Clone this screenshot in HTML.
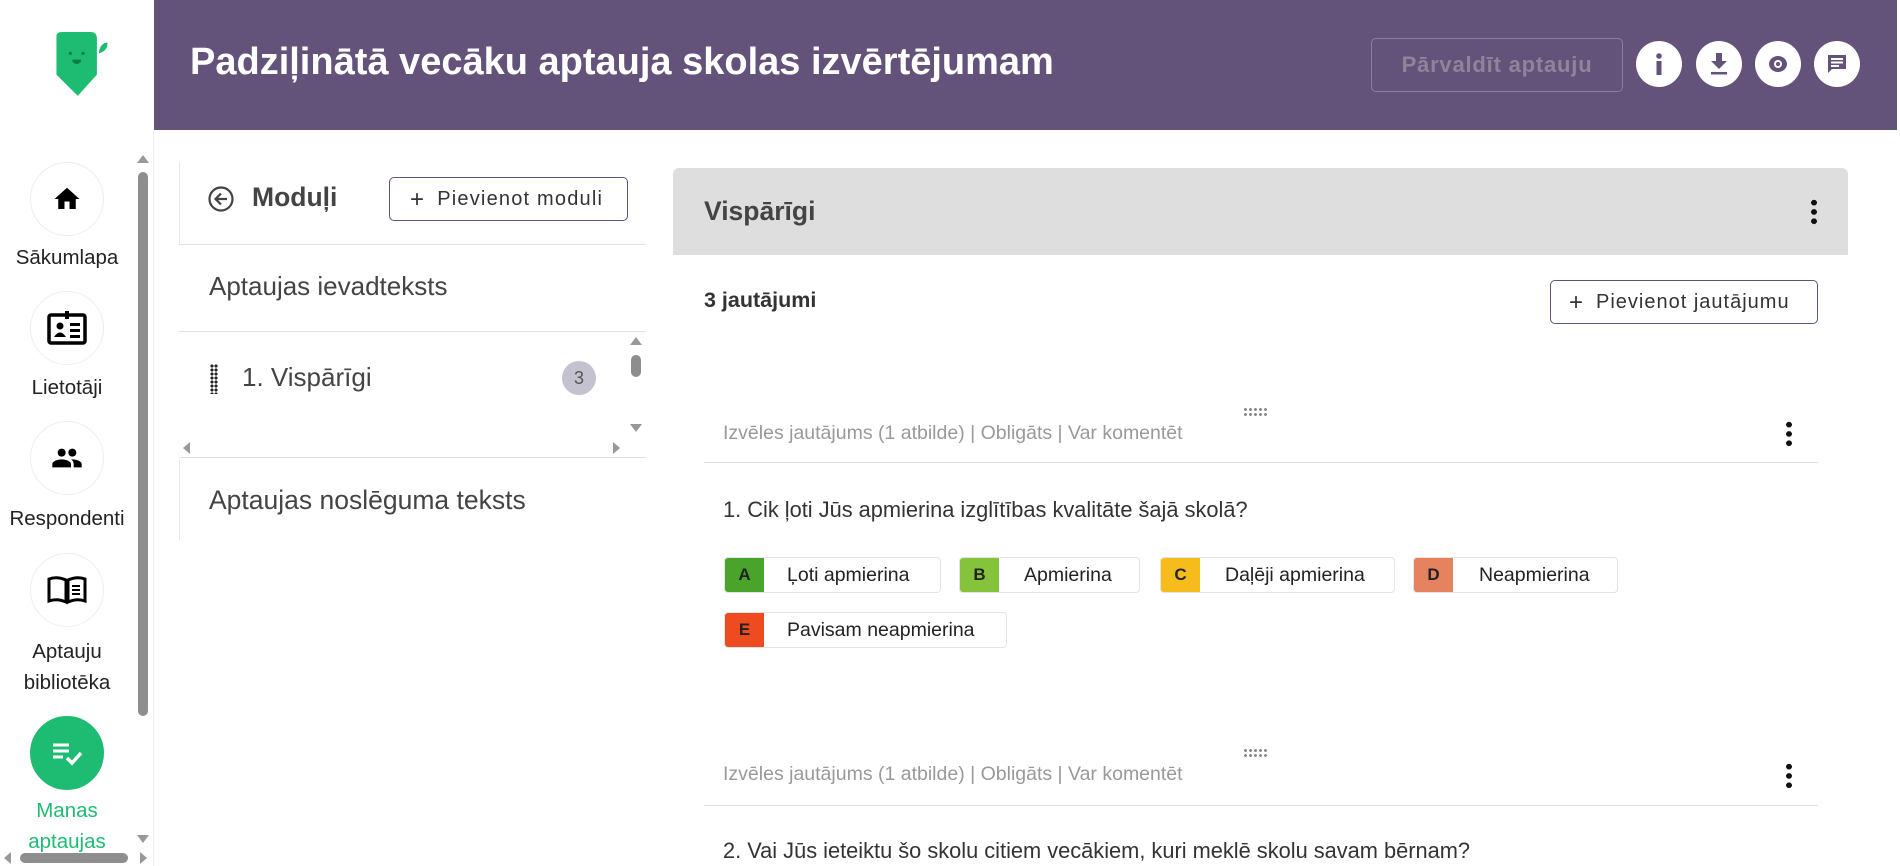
<!DOCTYPE html>
<html><head><meta charset="utf-8"><style>
*{box-sizing:border-box;margin:0;padding:0}
body{width:1900px;height:866px;overflow:hidden;background:#fff;font-family:"Liberation Sans",Arial,sans-serif;position:relative;color:#222}
.a{position:absolute}
.hdr{left:154px;top:0;width:1743px;height:130px;background:#63527a}
.title{left:190px;top:41px;font-size:38px;font-weight:bold;color:#fff;white-space:nowrap}
.mbtn{left:1371px;top:38px;width:252px;height:54px;border:1px solid #8a7d9c;border-radius:5px;color:#8f8499;font-size:22px;font-weight:bold;text-align:center;line-height:52px;letter-spacing:.8px}
.ic{width:46px;height:46px;border-radius:50%;background:#fff;top:41px}
.nav{width:74px;height:74px;border-radius:50%;border:1px solid #eee;left:30px;display:flex;align-items:center;justify-content:center}
.nl{left:0;width:134px;text-align:center;font-size:20.5px;color:#222;line-height:32px}
.sep{background:#e0e0e0;height:1px}
.opt{height:36px;border:1px solid #e4e4e4;border-radius:4px;background:#fff}
.opt b{position:absolute;left:0;top:0;width:39px;height:34px;border-radius:3px 0 0 3px;text-align:center;line-height:34px;font-size:17px}
.opt span{position:absolute;top:0;line-height:34px;font-size:19.5px}
.meta{font-size:19.5px;color:#999}
.dots{width:24px;height:10px;background-image:radial-gradient(circle,#888 1.3px,transparent 1.6px);background-size:5px 5px}
.keb{width:6px;height:28px;background-image:radial-gradient(circle,#111 2.8px,transparent 3px);background-size:6px 9.3px}
</style></head><body>
<svg class="a" style="left:52px;top:32px" width="60" height="66" viewBox="0 0 56 62"><path d="M4 4 Q4 0 9 0 H36 Q42 0 42 6 V40 L24 60 L4 40 Z" fill="#1ebc73"/><path d="M44 18 Q46 10 52 10 Q52 18 44 20Z" fill="#1ebc73"/><circle cx="17" cy="20" r="1.5" fill="#0b7a45"/><circle cx="29" cy="20" r="1.5" fill="#0b7a45"/><path d="M19 26 h8 v2 q-4 4 -8 0z" fill="#0b7a45"/></svg>
<div class="a" style="left:153px;top:130px;width:1px;height:736px;background:#eee"></div>
<div class="a nav" style="top:162px"><svg width="32" height="30" viewBox="0 0 24 24"><path d="M10 20v-6h4v6h5v-8h3L12 3 2 12h3v8z" fill="#000"/></svg></div>
<div class="a nl" style="top:242px">Sākumlapa</div>
<div class="a nav" style="top:291px"><svg width="40" height="36" viewBox="0 0 40 36"><rect x="2" y="5" width="36" height="28" rx="2" fill="none" stroke="#000" stroke-width="3.5"/><rect x="18" y="1" width="4" height="8" fill="#000"/><circle cx="13" cy="16" r="3.5" fill="#000"/><path d="M7 27 q6-9 12 0z" fill="#000"/><rect x="23" y="13" width="10" height="3" fill="#000"/><rect x="23" y="19" width="10" height="3" fill="#000"/><rect x="23" y="25" width="10" height="3" fill="#000"/></svg></div>
<div class="a nl" style="top:372px">Lietotāji</div>
<div class="a nav" style="top:421px"><svg width="32" height="32" viewBox="0 0 24 24"><path d="M16 11c1.66 0 3-1.34 3-3s-1.34-3-3-3-3 1.340-3 3 1.34 3 3 3zm-8 0c1.66 0 3-1.34 3-3S9.66 5 8 5 5 6.34 5 8s1.34 3 3 3zm0 2c-2.33 0-7 1.17-7 3.5V19h14v-2.5C15 14.170 10.33 13 8 13zm8 0c-.29 0-.62.02-.97.05 1.16.84 1.97 1.97 1.97 3.45V19h6v-2.5c0-2.33-4.67-3.5-7-3.5z" fill="#000"/></svg></div>
<div class="a nl" style="top:503px">Respondenti</div>
<div class="a nav" style="top:553px"><svg width="40" height="30" viewBox="0 0 40 30"><path d="M2 4 Q10 1 19 5 V27 Q10 23 2 26Z M38 4 Q30 1 21 5 V27 Q30 23 38 26Z" fill="none" stroke="#000" stroke-width="3"/><path d="M25 11h8M25 15h8M25 19h8" stroke="#000" stroke-width="2"/></svg></div>
<div class="a nl" style="top:636px;line-height:31px">Aptauju<br>bibliotēka</div>
<div class="a nav" style="top:716px;background:#1ebc73;border-color:#1ebc73"><svg width="34" height="30" viewBox="0 0 34 30"><path d="M3 7h16M3 13h16M3 19h10" stroke="#fff" stroke-width="3"/><path d="M17 20l5 5 9-10" stroke="#fff" stroke-width="3.5" fill="none"/></svg></div>
<div class="a nl" style="top:795px;color:#1ebc73;line-height:31px">Manas<br>aptaujas</div>
<div class="a" style="left:138px;top:172px;width:10px;height:544px;border-radius:5px;background:#8e8e8e"></div>
<div class="a" style="left:137px;top:155px;width:0;height:0;border:6px solid transparent;border-bottom:8px solid #999;border-top:0"></div>
<div class="a" style="left:137px;top:835px;width:0;height:0;border:6px solid transparent;border-top:8px solid #999;border-bottom:0"></div>
<div class="a" style="left:20px;top:853px;width:108px;height:10px;border-radius:5px;background:#8e8e8e"></div>
<div class="a" style="left:4px;top:852px;border:6px solid transparent;border-right:7px solid #999;border-left:0"></div>
<div class="a" style="left:140px;top:852px;border:6px solid transparent;border-left:7px solid #999;border-right:0"></div>
<div class="a hdr"></div>
<div class="a title">Padziļinātā vecāku aptauja skolas izvērtējumam</div>
<div class="a mbtn">Pārvaldīt aptauju</div>
<div class="a ic" style="left:1636px"><svg width="46" height="46" viewBox="0 0 46 46"><circle cx="23" cy="15" r="2.8" fill="#63527a"/><rect x="20.5" y="20" width="5" height="14" fill="#63527a"/></svg></div>
<div class="a ic" style="left:1696px"><svg width="46" height="46" viewBox="0 0 46 46"><path d="M20 12h6v8h5l-8 8-8-8h5z" fill="#63527a"/><rect x="15" y="31" width="16" height="2.5" fill="#63527a"/></svg></div>
<div class="a ic" style="left:1755px"><svg width="46" height="46" viewBox="0 0 46 46"><ellipse cx="23" cy="23" rx="9" ry="8" fill="#63527a"/><circle cx="23" cy="23" r="4" fill="#fff"/><circle cx="23" cy="23" r="2" fill="#63527a"/></svg></div>
<div class="a ic" style="left:1814px"><svg width="46" height="46" viewBox="0 0 46 46"><path d="M14 14h18v14H18l-4 4z" fill="#63527a"/><path d="M17 18h12M17 21.5h12M17 25h8" stroke="#fff" stroke-width="2"/></svg></div>
<div class="a" style="left:179px;top:162px;width:1px;height:82px;background:#e6e6e6"></div>
<div class="a" style="left:179px;top:460px;width:1px;height:80px;background:#e6e6e6"></div>
<svg class="a" style="left:207px;top:185px" width="28" height="28" viewBox="0 0 28 28"><circle cx="14" cy="14" r="11.5" fill="none" stroke="#444" stroke-width="2.2"/><path d="M20 14H9M14 8.5L8.5 14l5.5 5.5" fill="none" stroke="#444" stroke-width="2.2"/></svg>
<div class="a" style="left:252px;top:182px;font-size:26.5px;font-weight:bold;color:#444">Moduļi</div>
<div class="a" style="left:389px;top:177px;width:239px;height:44px;border:1px solid #63527a;border-radius:5px;font-size:20px;color:#333;line-height:42px;padding-left:20px;letter-spacing:1.2px"><span style="font-size:24px;vertical-align:-2px;margin-right:12px">+</span>Pievienot moduli</div>
<div class="a sep" style="left:179px;top:244px;width:467px"></div>
<div class="a" style="left:209px;top:271px;font-size:26px;color:#444">Aptaujas ievadteksts</div>
<div class="a sep" style="left:179px;top:331px;width:467px"></div>
<div class="a" style="left:210px;top:364px;width:8px;height:30px;background-image:radial-gradient(circle,#222 1.4px,transparent 1.8px);background-size:4px 4px"></div>
<div class="a" style="left:242px;top:362px;font-size:26px;color:#444">1. Vispārīgi</div>
<div class="a" style="left:562px;top:361px;width:34px;height:34px;border-radius:50%;background:#c4c2cf;text-align:center;line-height:34px;font-size:18px;color:#555">3</div>
<div class="a" style="left:630px;top:337px;border:6px solid transparent;border-bottom:8px solid #999;border-top:0"></div>
<div class="a" style="left:631px;top:355px;width:10px;height:22px;border-radius:5px;background:#8e8e8e"></div>
<div class="a" style="left:630px;top:424px;border:6px solid transparent;border-top:8px solid #999;border-bottom:0"></div>
<div class="a" style="left:183px;top:442px;border:6px solid transparent;border-right:7px solid #999;border-left:0"></div>
<div class="a" style="left:613px;top:442px;border:6px solid transparent;border-left:7px solid #999;border-right:0"></div>
<div class="a sep" style="left:179px;top:457px;width:467px"></div>
<div class="a" style="left:209px;top:485px;font-size:26.5px;color:#444">Aptaujas noslēguma teksts</div>
<div class="a" style="left:673px;top:168px;width:1175px;height:87px;background:#dedede;border-radius:6px 6px 0 0"></div>
<div class="a" style="left:704px;top:196px;font-size:26.5px;font-weight:bold;color:#444">Vispārīgi</div>
<div class="a keb" style="left:1811px;top:198px"></div>
<div class="a" style="left:704px;top:288px;font-size:21.5px;font-weight:bold;color:#333">3 jautājumi</div>
<div class="a" style="left:1550px;top:280px;width:268px;height:44px;border:1px solid #63527a;border-radius:5px;font-size:20px;color:#333;line-height:42px;padding-left:18px;letter-spacing:1px"><span style="font-size:24px;vertical-align:-2px;margin-right:12px">+</span>Pievienot jautājumu</div>
<div class="a dots" style="left:1243px;top:407px"></div>
<div class="a meta" style="left:723px;top:422px">Izvēles jautājums (1 atbilde) | Obligāts | Var komentēt</div>
<div class="a keb" style="left:1786px;top:420px"></div>
<div class="a sep" style="left:704px;top:462px;width:1114px"></div>
<div class="a" style="left:723px;top:497px;font-size:21.8px;color:#333">1. Cik ļoti Jūs apmierina izglītības kvalitāte šajā skolā?</div>
<div class="a opt" style="left:724px;top:557px;width:217px"><b style="background:#4aa32b">A</b><span style="left:62px">Ļoti apmierina</span></div>
<div class="a opt" style="left:959px;top:557px;width:181px"><b style="background:#85c43a">B</b><span style="left:64px">Apmierina</span></div>
<div class="a opt" style="left:1160px;top:557px;width:235px"><b style="background:#f5bc1c">C</b><span style="left:64px">Daļēji apmierina</span></div>
<div class="a opt" style="left:1413px;top:557px;width:205px"><b style="background:#e58361">D</b><span style="left:65px">Neapmierina</span></div>
<div class="a opt" style="left:724px;top:612px;width:283px"><b style="background:#ee4c20">E</b><span style="left:62px">Pavisam neapmierina</span></div>
<div class="a dots" style="left:1243px;top:748px"></div>
<div class="a meta" style="left:723px;top:763px">Izvēles jautājums (1 atbilde) | Obligāts | Var komentēt</div>
<div class="a keb" style="left:1786px;top:762px"></div>
<div class="a sep" style="left:704px;top:805px;width:1114px"></div>
<div class="a" style="left:723px;top:838px;font-size:21.8px;color:#333">2. Vai Jūs ieteiktu šo skolu citiem vecākiem, kuri meklē skolu savam bērnam?</div>
</body></html>
